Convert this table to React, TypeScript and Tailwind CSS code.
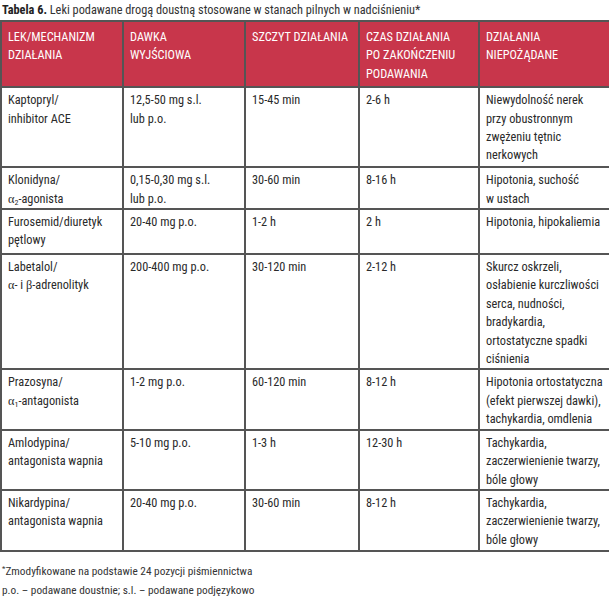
const A = ({ children }: { children: React.ReactNode }) => (
  <span className="font-['Liberation_Serif',serif]">{children}</span>
);

const rows: { h: string; cells: React.ReactNode[] }[] = [
  {
    h: 'h-[80px]',
    cells: [
      <>Kaptopryl/<br />inhibitor ACE</>,
      <>12,5-50 mg s.l.<br />lub p.o.</>,
      '15-45 min',
      '2-6 h',
      <>Niewydolność nerek<br />przy obustronnym<br />zwężeniu tętnic<br />nerkowych</>,
    ],
  },
  {
    h: 'h-[39px]',
    cells: [
      <>Klonidyna/<br /><A>α</A><sub className="text-[8px]">2</sub>-agonista</>,
      <>0,15-0,30 mg s.l.<br />lub p.o.</>,
      '30-60 min',
      '8-16 h',
      <>Hipotonia, suchość<br />w ustach</>,
    ],
  },
  {
    h: 'h-[45px]',
    cells: [
      <>Furosemid/diuretyk<br />pętlowy</>,
      '20-40 mg p.o.',
      '1-2 h',
      '2 h',
      'Hipotonia, hipokaliemia',
    ],
  },
  {
    h: 'h-[115px]',
    cells: [
      <>Labetalol/<br /><A>α</A>- i <A>β</A>-adrenolityk</>,
      '200-400 mg p.o.',
      '30-120 min',
      '2-12 h',
      <>Skurcz oskrzeli,<br />osłabienie kurczliwości<br />serca, nudności,<br />bradykardia,<br />ortostatyczne spadki<br />ciśnienia</>,
    ],
  },
  {
    h: 'h-[60px]',
    cells: [
      <>Prazosyna/<br /><A>α</A><sub className="text-[8px]">1</sub>-antagonista</>,
      '1-2 mg p.o.',
      '60-120 min',
      '8-12 h',
      <>Hipotonia ortostatyczna<br />(efekt pierwszej dawki),<br />tachykardia, omdlenia</>,
    ],
  },
  {
    h: 'h-[60px]',
    cells: [
      <>Amlodypina/<br />antagonista wapnia</>,
      '5-10 mg p.o.',
      '1-3 h',
      '12-30 h',
      <>Tachykardia,<br />zaczerwienienie twarzy,<br />bóle głowy</>,
    ],
  },
  {
    h: 'h-[61px]',
    cells: [
      <>Nikardypina/<br />antagonista wapnia</>,
      '20-40 mg p.o.',
      '30-60 min',
      '8-12 h',
      <>Tachykardia,<br />zaczerwienienie twarzy,<br />bóle głowy</>,
    ],
  },
];

const headers: React.ReactNode[] = [
  <>LEK/MECHANIZM<br />DZIAŁANIA</>,
  <>DAWKA<br />WYJŚCIOWA</>,
  'SZCZYT DZIAŁANIA',
  <>CZAS DZIAŁANIA<br />PO ZAKOŃCZENIU<br />PODAWANIA</>,
  <>DZIAŁANIA<br />NIEPOŻĄDANE</>,
];

export default function App() {
  return (
    <div className="w-[609px] h-[600px] bg-white font-['Roboto_Condensed','Liberation_Sans',sans-serif] text-[#2a2a2a]">
      <p className="h-[20px] pl-[2px] text-[12.3px] leading-[20px] text-[#333]">
        <b className="text-[#222]">Tabela 6.</b> Leki podawane drogą doustną stosowane w stanach pilnych w nadciśnieniu*
      </p>
      <table className="w-[609px] table-fixed border-collapse text-[12.3px] leading-[18.4px]">
        <colgroup>
          <col className="w-[122px]" />
          <col className="w-[122px]" />
          <col className="w-[114px]" />
          <col className="w-[120px]" />
          <col className="w-[131px]" />
        </colgroup>
        <thead>
          <tr className="h-[65px] bg-[#c8364b] text-white">
            {headers.map((c, i) => (
              <th key={i} className="border-2 border-[#555] pl-[6px] pr-0 pt-[6px] pb-[3px] text-left align-top font-normal whitespace-nowrap">
                {c}
              </th>
            ))}
          </tr>
        </thead>
        <tbody>
          {rows.map((r, i) => (
            <tr key={i} className={r.h}>
              {r.cells.map((c, j) => (
                <td key={j} className="border-2 border-[#555] pl-[6px] pr-0 pt-[3px] align-top whitespace-nowrap">
                  {c}
                </td>
              ))}
            </tr>
          ))}
        </tbody>
      </table>
      <div className="mt-[10px] pl-[2px] text-[11.3px] leading-[19px] text-[#333]">
        <p><sup className="text-[8px]">*</sup>Zmodyfikowane na podstawie 24 pozycji piśmiennictwa</p>
        <p>p.o. – podawane doustnie; s.l. – podawane podjęzykowo</p>
      </div>
    </div>
  );
}
